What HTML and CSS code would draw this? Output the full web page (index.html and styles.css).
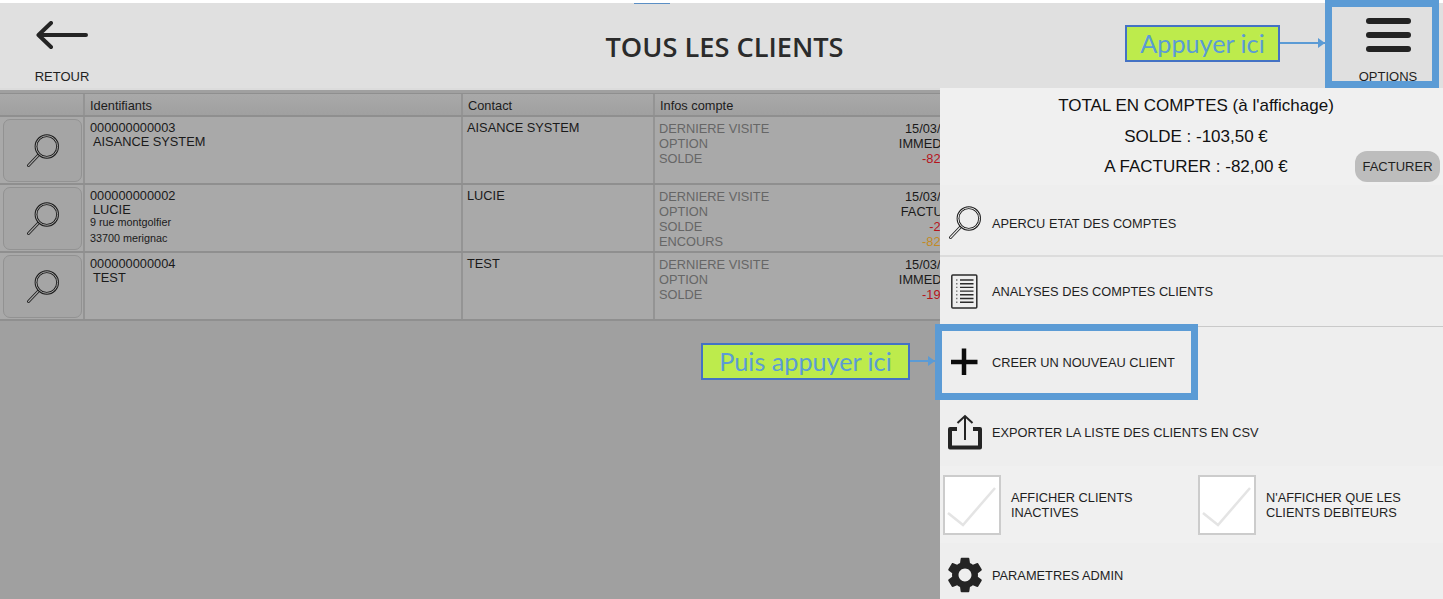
FILE: index.html
```html
<!DOCTYPE html>
<html lang="fr">
<head>
<meta charset="utf-8">
<title>Tous les clients</title>
<link rel="stylesheet" href="styles.css">
</head>
<body>
<svg class="defs" width="0" height="0" aria-hidden="true">
  <symbol id="loupe" viewBox="0 0 34 34">
    <path class="l-out" d="M13 20.500 2.500 31.500"/>
    <path class="l-in" d="M13 20.500 2.500 31.500"/>
    <circle class="c-out" cx="20.800" cy="12.500" r="10.800"/>
    <circle class="c-in" cx="20.800" cy="12.500" r="10.800"/>
  </symbol>
  <symbol id="tick" viewBox="0 0 54 56">
    <path d="M3 36 18 48 50 11" fill="none" stroke="#e4e4e4" stroke-width="2.500"/>
  </symbol>
</svg>
<div class="app">
  <header class="topbar">
    <div class="tool">
      <svg class="back-icon" width="54" height="30" viewBox="0 0 54 30"><path d="M51 14H4M16 2 3.500 14 16 26" fill="none" stroke="#242424" stroke-width="4" stroke-linecap="round" stroke-linejoin="round"/></svg>
      <span class="tool-label">RETOUR</span>
    </div>
    <h1 class="title">TOUS LES CLIENTS</h1>
    <div class="tool">
      <div class="burger"><i></i><i></i><i></i></div>
      <span class="tool-label">OPTIONS</span>
    </div>
  </header>
  <main class="main">
    <section class="list">
      <div class="row head">
        <div class="cell c1"></div>
        <div class="cell c2">Identifiants</div>
        <div class="cell c3">Contact</div>
        <div class="cell c4">Infos compte</div>
      </div>
      <div class="row">
        <div class="cell c1"><div class="find"><svg class="loupe" width="34" height="34"><use href="#loupe"/></svg></div></div>
        <div class="cell c2 ident"><div>000000000003</div><div class="name">AISANCE SYSTEM</div></div>
        <div class="cell c3 contact">AISANCE SYSTEM</div>
        <div class="cell c4 infos">
          <div class="kv"><span>DERNIERE VISITE</span><b>15/03/2019</b></div>
          <div class="kv"><span>OPTION</span><b>IMMEDIATE</b></div>
          <div class="kv"><span>SOLDE</span><b class="neg">-82,00 €</b></div>
        </div>
      </div>
      <div class="row">
        <div class="cell c1"><div class="find"><svg class="loupe" width="34" height="34"><use href="#loupe"/></svg></div></div>
        <div class="cell c2 ident"><div>000000000002</div><div class="name">LUCIE</div><div class="addr">9 rue montgolfier</div><div class="addr">33700 merignac</div></div>
        <div class="cell c3 contact">LUCIE</div>
        <div class="cell c4 infos">
          <div class="kv"><span>DERNIERE VISITE</span><b>15/03/2019</b></div>
          <div class="kv"><span>OPTION</span><b>FACTURES</b></div>
          <div class="kv"><span>SOLDE</span><b class="neg">-2,50 €</b></div>
          <div class="kv"><span>ENCOURS</span><b class="due">-82,00 €</b></div>
        </div>
      </div>
      <div class="row">
        <div class="cell c1"><div class="find"><svg class="loupe" width="34" height="34"><use href="#loupe"/></svg></div></div>
        <div class="cell c2 ident"><div>000000000004</div><div class="name">TEST</div></div>
        <div class="cell c3 contact">TEST</div>
        <div class="cell c4 infos">
          <div class="kv"><span>DERNIERE VISITE</span><b>15/03/2019</b></div>
          <div class="kv"><span>OPTION</span><b>IMMEDIATE</b></div>
          <div class="kv"><span>SOLDE</span><b class="neg">-19,00 €</b></div>
        </div>
      </div>
    </section>
    <aside class="panel">
      <div class="totals">
        <div class="total-line">TOTAL EN COMPTES (à l'affichage)</div>
        <div class="total-line">SOLDE : -103,50 €</div>
        <div class="total-line">A FACTURER : -82,00 €</div>
        <button class="bill">FACTURER</button>
      </div>
      <div class="item i-apercu">
        <svg class="loupe menu-loupe" width="34" height="34"><use href="#loupe"/></svg>
        <span>APERCU ETAT DES COMPTES</span>
      </div>
      <div class="item i-analyses">
        <svg width="34" height="36" viewBox="0 0 34 36"><rect x="3.800" y="1" width="25" height="33" rx="1" fill="none" stroke="#2b2b2b" stroke-width="1.500"/><path d="M12 6H25.500M12 9.700H25.500M12 13.400H25.500M12 17.100H25.500M12 20.800H25.500M12 24.500H25.500M12 28.200H25.500" stroke="#2b2b2b" stroke-width="1.400"/><path d="M8 6H9.500M8 9.700H9.500M8 13.400H9.500M8 17.100H9.500M8 20.800H9.500M8 24.500H9.500M8 28.200H9.500" stroke="#777" stroke-width="1.400"/></svg>
        <span>ANALYSES DES COMPTES CLIENTS</span>
      </div>
      <div class="item i-creer">
        <svg width="34" height="30" viewBox="0 0 34 30"><path d="M16 1.500V28M3 15H29.500" stroke="#0c0c0c" stroke-width="4.500"/></svg>
        <span>CREER UN NOUVEAU CLIENT</span>
      </div>
      <div class="item i-export">
        <svg class="export-icon" width="34" height="36" viewBox="0 0 34 36"><path d="M9 15H2V33.500H32V15H25" fill="none" stroke="#242424" stroke-width="4" stroke-linejoin="round"/><path d="M17 26V2M9.500 9 17 2 24.500 9" fill="none" stroke="#242424" stroke-width="2"/></svg>
        <span>EXPORTER LA LISTE DES CLIENTS EN CSV</span>
      </div>
      <div class="checks">
        <div class="check"><div class="box"><svg width="54" height="56"><use href="#tick"/></svg></div><span>AFFICHER CLIENTS<br>INACTIVES</span></div>
        <div class="check"><div class="box"><svg width="54" height="56"><use href="#tick"/></svg></div><span>N'AFFICHER QUE LES<br>CLIENTS DEBITEURS</span></div>
      </div>
      <div class="item i-param">
        <svg class="gear" width="36" height="36" viewBox="2.500 2 19 20"><path fill="#242424" d="M19.140 12.940c.040-.300.060-.610.060-.940 0-.320-.020-.640-.070-.940l2.030-1.580a.49.49 0 0 0 .12-.610l-1.920-3.320a.488.488 0 0 0-.590-.220l-2.390.960c-.500-.380-1.030-.700-1.620-.940l-.360-2.540a.484.484 0 0 0-.480-.410h-3.840c-.240 0-.430.170-.470.410l-.360 2.540c-.590.240-1.130.570-1.620.940l-2.390-.960c-.220-.080-.470 0-.590.220L2.740 8.870c-.120.210-.080.470.120.610l2.030 1.580c-.050.300-.090.630-.090.940s.020.640.070.940l-2.030 1.580a.49.49 0 0 0-.12.610l1.920 3.320c.120.220.370.290.590.220l2.390-.960c.500.380 1.030.700 1.620.940l.360 2.540c.050.240.240.410.480.410h3.840c.240 0 .440-.170.470-.410l.360-2.540c.590-.240 1.130-.560 1.620-.940l2.390.960c.220.080.470 0 .590-.220l1.920-3.320c.120-.220.070-.470-.120-.610l-2.010-1.580zM12 15.600c-1.980 0-3.600-1.620-3.600-3.600s1.620-3.600 3.600-3.600 3.600 1.620 3.600 3.600-1.620 3.600-3.600 3.600z"/></svg>
        <span>PARAMETRES ADMIN</span>
      </div>
    </aside>
  </main>
</div>

<div class="mark mark-top"></div>
<div class="frame frame-options"></div>
<div class="frame frame-new"></div>
<div class="callout callout-one">Appuyer ici<i class="arrow arrow-one"></i></div>
<div class="callout callout-two">Puis appuyer ici<i class="arrow arrow-two"></i></div>
</body>
</html>
```
FILE: styles.css
```css
* { box-sizing: border-box; }
html, body { margin: 0; height: 100%; }
body {
  position: relative;
  overflow: hidden;
  background: #fff;
  font-family: "Liberation Sans", Arial, sans-serif;
  color: #222;
}
.defs { position: absolute; }
.app {
  height: 599px;
  padding-top: 3px;
  display: flex;
  flex-direction: column;
}

/* top bar */
.topbar {
  height: 85px;
  flex: none;
  background: #e0e0e0;
  display: flex;
  align-items: stretch;
}
.tool {
  width: 124px;
  flex: none;
  display: flex;
  flex-direction: column;
  align-items: center;
  justify-content: flex-end;
  padding-bottom: 4px;
}
.tool:last-child { width: 110px; }
.tool-label { font-size: 13px; line-height: 15px; color: #1f1f1f; }
.back-icon { margin-bottom: 18px; }
.burger {
  display: flex;
  flex-direction: column;
  gap: 8px;
  margin-bottom: 17px;
}
.burger i { display: block; width: 45px; height: 6px; border-radius: 3px; background: #232323; }
.title {
  flex: 1;
  margin: 0;
  padding: 2px 8px 0 0;
  align-self: center;
  text-align: center;
  font-family: "Open Sans", sans-serif;
  font-size: 27.200px;
  font-weight: 600;
  color: #2b2b2b;
}

/* main */
.main { flex: 1; min-height: 0; display: flex; }
.list {
  flex: 1;
  min-width: 0;
  overflow: hidden;
  background: #a0a0a0;
  border-top: 2px solid #dcdcdc;
  padding-top: 3px;
}
.row {
  display: flex;
  width: 975px;
  height: 68px;
  background: #a9a9a9;
  border-bottom: 2px solid #8f8f8f;
}
.row.head {
  height: 24px;
  background: linear-gradient(#a9a9a9, #a0a0a0);
  border-top: 1px solid #8f8f8f;
  border-bottom: 2px solid #8f8f8f;
  font-size: 12.800px;
  line-height: 23px;
  color: #1c1c1c;
}
.cell { flex: none; border-right: 2px solid #949494; }
.c1 { width: 85px; padding: 2px 2px 0 3px; }
.c2 { width: 378px; padding-left: 5px; }
.c3 { width: 192px; padding-left: 5px; }
.c4 { width: 320px; padding-left: 5px; border-right: 0; }
.find {
  width: 79px;
  height: 63px;
  border: 1px solid #929292;
  border-radius: 7px;
  background: #a5a5a5;
  display: flex;
  align-items: center;
  justify-content: center;
}
.loupe { --dark: #1d1d1d; --light: #a5a5a5; }
.menu-loupe { --light: #efefef; }
.l-out { stroke: var(--dark); stroke-width: 3; stroke-linecap: round; fill: none; }
.l-in { stroke: var(--light); stroke-width: 1.200; stroke-linecap: round; fill: none; }
.c-out { stroke: var(--dark); stroke-width: 2.800; fill: none; }
.c-in { stroke: var(--light); stroke-width: 1; fill: none; }

.ident { font-size: 12.800px; line-height: 14px; color: #1a1a1a; padding-top: 4px; padding-left: 5px; }
.name { padding-left: 3px; }
.addr { font-size: 10.800px; line-height: 15.500px; }
.name + .addr { margin-top: -2px; }
.contact { font-size: 12.800px; line-height: 14px; color: #1a1a1a; padding-top: 4px; padding-left: 4px; }
.infos { padding-top: 4px; padding-left: 4px; padding-right: 6px; font-size: 12.800px; line-height: 15px; }
.kv { display: flex; justify-content: space-between; }
.kv span { color: #666; }
.kv b { font-weight: 400; color: #1a1a1a; }
.kv b.neg { color: #b5141c; }
.kv b.due { color: #c28a26; }

/* right panel */
.panel {
  width: 503px;
  flex: none;
  background: #eeeeee;
  display: flex;
  flex-direction: column;
}
.totals {
  position: relative;
  height: 97px;
  flex: none;
  background: #f0f0f0;
  margin-bottom: 5px;
  padding: 3px 0 0 9px;
  text-align: center;
  color: #111;
}
.total-line { font-size: 17px; line-height: 30.500px; }
.bill {
  position: absolute;
  left: 415px;
  top: 63px;
  width: 85px;
  height: 31px;
  border: 0;
  border-radius: 12px;
  background: #bdbdbd;
  font: 13px/31px "Liberation Sans", Arial, sans-serif;
  color: #1f1f1f;
  padding: 0;
}
.item {
  display: flex;
  align-items: center;
  gap: 10px;
  padding-left: 8px;
  font-size: 12.800px;
  color: #1f1f1f;
  flex: none;
}
.item svg { flex: none; }
.i-apercu { height: 67px; border-bottom: 2px solid #dcdcdc; padding-top: 1px; }
.i-analyses { height: 70px; border-bottom: 1px solid #c9c9c9; }
.i-creer { height: 70px; }
.i-export { height: 69px; }
.i-export span { padding-top: 2px; }
.i-param { height: 64px; }
.gear { margin: 0 -1px; }
.checks {
  height: 77px;
  flex: none;
  background: #f0f0f0;
  display: flex;
  padding: 9px 0 0 3px;
}
.check {
  width: 255px;
  flex: none;
  display: flex;
  align-items: flex-start;
  gap: 10px;
  font-size: 12.800px;
  line-height: 15px;
  color: #1f1f1f;
}
.check span { padding-top: 15px; }
.box {
  width: 58px;
  height: 60px;
  flex: none;
  background: #fff;
  border: 2px solid #cccccc;
}
.box svg { display: block; }

/* annotations lying over the interface */
.mark-top { position: absolute; left: 634px; top: 3px; width: 36px; height: 1px; background: #5b8fc5; }
.frame { position: absolute; border: 7px solid #5b9bd5; }
.frame-options { left: 1325px; top: 0; width: 114px; height: 88px; }
.frame-new { left: 935px; top: 324px; width: 263px; height: 76px; }
.callout {
  position: absolute;
  height: 37px;
  background: #bdeb4c;
  border: 2px solid #4472c4;
  color: #5b9bd5;
  font-family: Lato, sans-serif;
  font-size: 25.200px;
  line-height: 33px;
  text-align: center;
}
.callout-one { left: 1125px; top: 25px; width: 155px; }
.callout-two { left: 701px; top: 343px; width: 209px; }
.arrow { position: absolute; height: 2px; background: #5b9bd5; }
.arrow::after {
  content: "";
  position: absolute;
  right: 0;
  top: -4px;
  border-left: 7px solid #5b9bd5;
  border-top: 5px solid transparent;
  border-bottom: 5px solid transparent;
}
.arrow-one { left: 153px; top: 15px; width: 45px; }
.arrow-two { left: 207px; top: 15px; width: 25px; }
```
